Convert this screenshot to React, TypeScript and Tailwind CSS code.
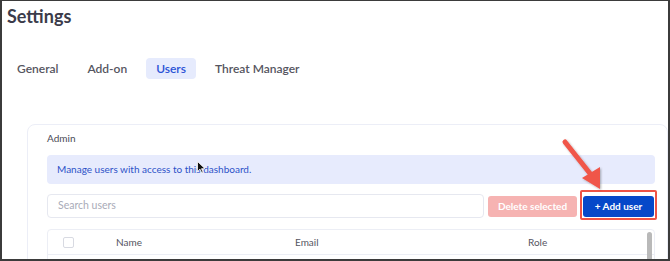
export default function App() {
  return (
    <div
      className="relative h-[261px] w-[670px] overflow-hidden border-x-2 border-b-2 border-t border-[#3b3b3b] bg-white text-[#3d3d4e]"
      style={{ fontFamily: "Lato, 'Open Sans', sans-serif" }}
    >
      <h1 className="ml-[5px] mt-[3px] text-[18px] font-bold leading-[24px] text-[#3b3b4a]">Settings</h1>

      <div className="ml-[5px] mt-[30px] flex items-center gap-[9px] text-[12px] font-semibold leading-[15px] text-[#555560]">
        <span className="px-[10px] py-[3px]">General</span>
        <span className="px-[10px] py-[3px]">Add-on</span>
        <span className="rounded-[4px] bg-[#e6ebfd] px-[10px] py-[3px] text-[#2b53d6]">Users</span>
        <span className="px-[10px] py-[3px]">Threat Manager</span>
      </div>

      <div className="ml-[25px] mt-[45px] h-[200px] rounded-t-[8px] border border-[#eceef7] bg-white pl-[19px] pr-[12px] pt-[7px]">
        <div className="text-[10px] leading-[13px] text-[#4a4a55]">Admin</div>
        <div className="mt-[10px] flex h-[29px] items-center rounded-[4px] bg-[#e7ebfd] px-[10px] text-[10px] text-[#2d52c8]">
          Manage users with access to this dashboard.
        </div>
        <div className="mt-[10px] flex h-[24px] items-center">
          <div className="flex h-[24px] w-[437px] items-center rounded-[4px] border border-[#e6e8f0] px-[10px] text-[10.5px] text-[#a9abb8]">
            Search users
          </div>
          <button className="ml-[4px] h-[21px] w-[89px] rounded-[3px] bg-[#f6b3b2] text-[10px] font-bold text-white">
            Delete selected
          </button>
          <div className="relative ml-[6px]">
            <button className="block h-[21px] w-[71px] rounded-[3px] bg-[#0648c9] text-[10px] font-bold text-white">
              + Add user
            </button>
            <span className="absolute -inset-x-[3px] -bottom-[3px] -top-[6px] rounded-[2px] border-2 border-[#ee5346]" />
          </div>
        </div>
        <div className="mt-[11px] h-[60px] rounded-t-[4px] border border-[#eceef5]">
          <div className="flex h-[25px] items-center border-b border-[#eceef5] text-[10px] text-[#55555f]">
            <span className="ml-[15px] h-[11px] w-[11px] shrink-0 rounded-[2px] border border-[#d8dae2]" />
            <span className="ml-[42px] w-[179px] shrink-0">Name</span>
            <span className="w-[233px] shrink-0">Email</span>
            <span>Role</span>
            <span className="ml-auto mr-[2px] mt-[2px] h-[30px] w-[5px] self-start rounded-full bg-[#b9b9b9]" />
          </div>
        </div>
      </div>

      {/* red annotation arrow */}
      <svg className="absolute left-[555px] top-[135px]" width="52" height="58" viewBox="0 0 52 58">
        <defs>
          <filter id="sh" x="-20%" y="-20%" width="140%" height="140%">
            <feDropShadow dx="1" dy="1" stdDeviation="1" floodOpacity="0.3" />
          </filter>
        </defs>
        <g filter="url(#sh)">
          <line x1="8" y1="6" x2="35" y2="40" stroke="#f0564a" strokeWidth="5" strokeLinecap="round" />
          <polygon points="25,42 43,31 43,53" fill="#f0564a" />
        </g>
      </svg>

      {/* mouse cursor */}
      <svg className="absolute left-[195px] top-[160px]" width="9" height="13" viewBox="0 0 9 13">
        <path d="M0.5 0.5 L0.5 10.5 L3 8.2 L4.8 12 L6.2 11.4 L4.5 7.7 L8 7.7 Z" fill="#111" stroke="#fff" strokeWidth="0.8" />
      </svg>
    </div>
  );
}
